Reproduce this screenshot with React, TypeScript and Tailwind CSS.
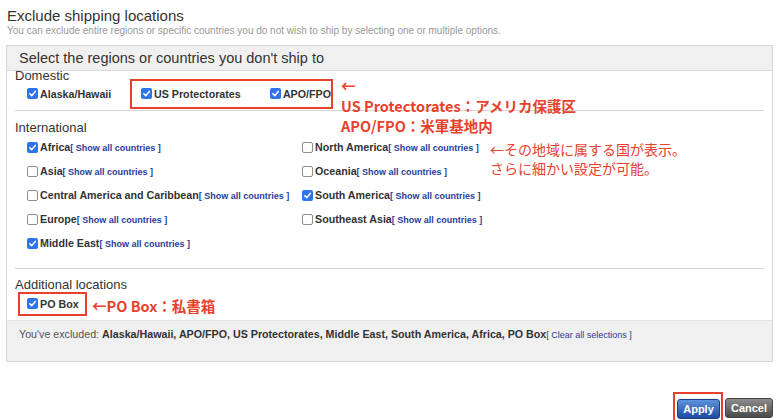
type Region = {
  name: string;
  checked: boolean;
};

const REGIONS: Region[] = [
  { name: "Africa", checked: true },
  { name: "North America", checked: false },
  { name: "Asia", checked: false },
  { name: "Oceania", checked: false },
  { name: "Central America and Caribbean", checked: false },
  { name: "South America", checked: true },
  { name: "Europe", checked: false },
  { name: "Southeast Asia", checked: false },
  { name: "Middle East", checked: true },
];

function Checkbox({ checked }: { checked: boolean }) {
  if (checked) {
    return (
      <span className="flex h-[11px] w-[11px] shrink-0 items-center justify-center rounded-[2px] bg-[#2f74eb]">
        <svg viewBox="0 0 10 10" className="h-[9px] w-[9px]">
          <path
            d="M2 5.3 4.1 7.4 8.1 2.7"
            fill="none"
            stroke="white"
            strokeWidth="1.7"
            strokeLinecap="round"
            strokeLinejoin="round"
          />
        </svg>
      </span>
    );
  }
  return <span className="h-[11px] w-[11px] shrink-0 rounded-[2px] border border-[#8f8f8f] bg-white" />;
}

function Option({ label, checked, link }: { label: string; checked: boolean; link?: boolean }) {
  return (
    <div className="flex items-center gap-[2px]">
      <Checkbox checked={checked} />
      <span className="flex items-baseline">
        <span className="text-[10.7px] font-bold text-[#333]">{label}</span>
        {link && (
          <a className="cursor-pointer text-[9px] font-bold text-[#2a3b9e]">[ Show all countries ]</a>
        )}
      </span>
    </div>
  );
}

export default function App() {
  return (
    <div className="relative h-[420px] w-[780px] overflow-hidden bg-white font-['Liberation_Sans',Arial,sans-serif]">
      <div className="pl-[7px] pt-[7px]">
        <h1 className="text-[15px] leading-[17px] text-[#333]">Exclude shipping locations</h1>
        <p className="text-[10px] leading-[13px] text-[#999]">
          You can exclude entire regions or specific countries you do not wish to ship by selecting one or multiple
          options.
        </p>
      </div>

      <div className="ml-[6px] mt-[8px] w-[767px] border border-[#d6d6d6]">
        <div className="h-[25px] border-b border-[#d9d9d9] bg-[#f0f0f0] pl-[12px] text-[14.5px] leading-[25px] text-[#333]">
          Select the regions or countries you don't ship to
        </div>

        <div className="px-[8px] pb-[4px]">
          <div className="-mt-[2px] h-[10px] text-[13px] leading-[13px] text-[#333]">Domestic</div>
          <div className="flex h-[30px] items-center">
            <div className="w-[115px] pl-[12px]">
              <Option label="Alaska/Hawaii" checked />
            </div>
            <div className="flex h-[30px] w-[203px] items-center border-2 border-[#e5412d] pl-[9px]">
              <div className="w-[129px]">
                <Option label="US Protectorates" checked />
              </div>
              <Option label="APO/FPO" checked />
            </div>
          </div>
          <div className="mt-[1px] h-px bg-[#d4d4d4]" />

          <div className="mt-[9px] text-[13px] leading-[15px] text-[#333]">International</div>
          <div className="grid grid-cols-[275px_1fr] pl-[12px]">
            {REGIONS.map((region) => (
              <div key={region.name} className="flex h-[24px] items-center">
                <Option label={region.name} checked={region.checked} link />
              </div>
            ))}
          </div>
          <div className="mt-[13px] h-px bg-[#d4d4d4]" />

          <div className="mt-[8px] text-[13px] leading-[15px] text-[#333]">Additional locations</div>
          <div className="ml-[3px] flex h-[24px] w-[69px] items-center border-2 border-[#e5412d] pl-[7px]">
            <Option label="PO Box" checked />
          </div>
        </div>

        <div className="h-[41px] border-t border-[#e2e2e2] bg-[#f0f0f0] pl-[12px] pt-[5px] leading-[14px]">
          <span className="text-[10.7px] text-[#555]">You've excluded: </span>
          <span className="text-[10.7px] font-bold text-[#333]">
            Alaska/Hawaii, APO/FPO, US Protectorates, Middle East, South America, Africa, PO Box
          </span>
          <a className="cursor-pointer text-[9px] text-[#2a3b9e]">[ Clear all selections ]</a>
        </div>
      </div>

      <div className="mt-[30px] flex items-center justify-end gap-[2px] pr-[7px]">
        <div className="border-2 border-[#e5412d] pb-[1px] pl-[2px] pr-[1px] pt-[2px]">
          <button
            type="button"
            className="h-[20px] w-[43px] rounded-[3px] border border-[#1b3f85] bg-gradient-to-b from-[#5f93dc] to-[#1d4aa0] text-[11px] font-bold text-white"
          >
            Apply
          </button>
        </div>
        <button
          type="button"
          className="mt-[1px] h-[20px] w-[48px] rounded-[3px] border border-[#444] bg-gradient-to-b from-[#8e8e8e] to-[#4a4a4a] text-[11px] font-bold text-white"
        >
          Cancel
        </button>
      </div>

      <div className="absolute left-[341px] top-[76px] font-['Noto_Sans_CJK_JP',sans-serif] text-[14.5px] font-bold leading-[20px] text-[#e8412c]">
        <div>←</div>
        <div>US Protectorates：アメリカ保護区</div>
        <div>APO/FPO：米軍基地内</div>
      </div>

      <div className="absolute left-[490px] top-[140px] flex flex-col gap-[1px] font-['Noto_Sans_CJK_JP',sans-serif] text-[14px] leading-[18px] text-[#e8412c]">
        <div>←その地域に属する国が表示。</div>
        <div>さらに細かい設定が可能。</div>
      </div>

      <div className="absolute left-[92px] top-[296px] font-['Noto_Sans_CJK_JP',sans-serif] text-[14.5px] font-bold leading-[20px] text-[#e8412c]">
        ←PO Box：私書箱
      </div>
    </div>
  );
}
